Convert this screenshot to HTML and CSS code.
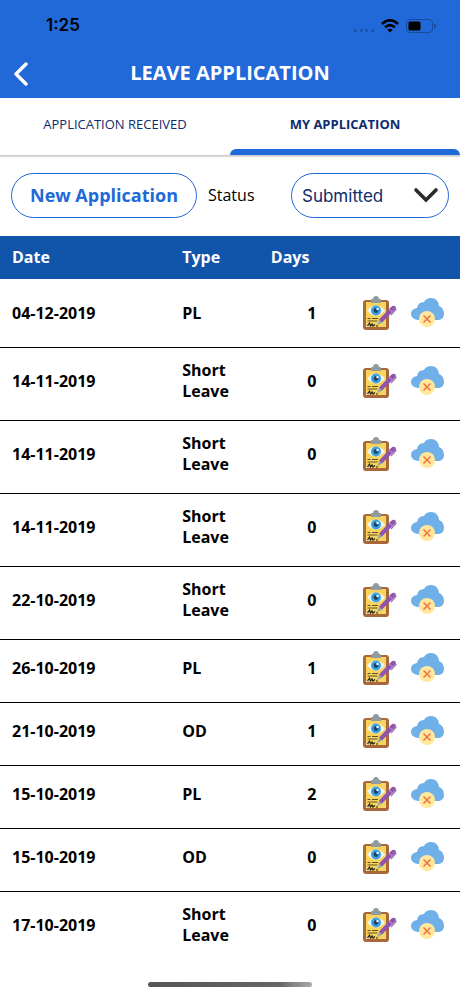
FILE: index.html
```
<!DOCTYPE html>
<html lang="en">
<head>
<meta charset="utf-8">
<meta name="viewport" content="width=device-width, initial-scale=1">
<title>Leave Application</title>
<link rel="stylesheet" href="styles.css">
</head>
<body>
<svg class="sprites" aria-hidden="true">
  <symbol id="view" viewBox="0 0 34 32">
    <rect x="0" y="3" width="26" height="30" rx="3" fill="#a9683c"/>
    <path d="M3 5h20v25H6l-3-3z" fill="#f8d45c"/>
    <path d="M3 27l3 3H3z" fill="#efe3c0"/>
    <path d="M8 6V3q0-1 1-1h1q0-3 3-3t3 3h1q1 0 1 1v3z" fill="#929ca0"/>
    <path d="M4 13.500q9-10 18 0-9 10-18 0z" fill="#eaf7fb"/>
    <circle cx="13" cy="13.500" r="5" fill="#3f9fd8"/>
    <circle cx="13" cy="13.500" r="2.400" fill="#17466f"/>
    <circle cx="14.500" cy="12" r="1.200" fill="#fff"/>
    <path d="M4.500 21.500h3M9 21.500h6M4.500 24h10" stroke="#5c5024" stroke-width="1.200" fill="none"/>
    <path d="M4.500 29l2-3 1 3 1.500-2 1 2 2-1.500M13 29h2" stroke="#27251b" stroke-width="1.200" fill="none"/>
    <path d="M14 28.500l2.500-6 3 2.500z" fill="#82a9b9"/>
    <path d="M16 22.500L28 10q2-2 4-1 1.500 1 .5 3L19 25.500z" fill="#9154ad"/>
    <path d="M31 9.500l2 3-5 5.500" stroke="#9b68b5" stroke-width="1.200" fill="none"/>
    <path d="M26 12l3.500 3" stroke="#c7a0d2" stroke-width="1"/>
  </symbol>
  <symbol id="withdraw" viewBox="0 0 34 32">
    <path d="M7 23Q0 22 0 17q0-5 6-6Q7 5 13 5q2-4 7-4 7 0 8 8 5 2 5 8 0 5-5 6z" fill="#6fb0e8"/>
    <circle cx="16" cy="22" r="8" fill="#ffe89c"/>
    <path d="M12.500 18.500l7 7m0-7l-7 7" stroke="#f2703f" stroke-width="1.500" fill="none"/>
  </symbol>
</svg>

<header class="top">
  <div class="status-bar">
    <span class="clock">1:25</span>
    <span class="signals">
      <svg width="20" height="14" viewBox="0 0 20 14" aria-hidden="true"><g fill="#1b54ac"><rect x="0" y="10" width="3" height="3" rx="1"/><rect x="6" y="10" width="3" height="3" rx="1"/><rect x="11" y="10" width="3" height="3" rx="1"/><rect x="17" y="10" width="3" height="3" rx="1"/></g></svg>
      <svg width="18" height="14" viewBox="0 0 18 14" aria-hidden="true"><g fill="none" stroke="#000" stroke-width="2.600"><path d="M1 5q8-7.500 16 0"/><path d="M4 8.300q5-4.500 10 0"/></g><path d="M6.300 10.700q2.700-2 5.400 0L9 13.500z"/></svg>
      <svg width="30" height="14" viewBox="0 0 30 14" aria-hidden="true"><rect x=".5" y=".5" width="26" height="13" rx="3.500" fill="none" stroke="#174b9b"/><rect x="2.500" y="2.500" width="12" height="9" rx="1.500"/><path d="M28 4.500q2 .5 2 2.500t-2 2.500z" fill="#174b9b"/></svg>
    </span>
  </div>
  <div class="title-bar">
    <button class="back" type="button" aria-label="Back"><svg width="16" height="26" viewBox="0 0 16 26" aria-hidden="true"><path d="M13 4L3 14l10 10" fill="none" stroke="#fff" stroke-width="3.400" stroke-linecap="round" stroke-linejoin="round"/></svg></button>
    <h1>LEAVE APPLICATION</h1>
  </div>
</header>

<nav class="tabs">
  <a class="tab" href="#received">APPLICATION RECEIVED</a>
  <a class="tab active" href="#mine" aria-current="page">MY APPLICATION</a>
</nav>

<main id="mine">
  <form class="filters">
    <button class="new" type="button">New Application</button>
    <label for="status">Status</label>
    <span class="picker">
      <select id="status"><option>Submitted</option></select>
      <svg class="arrow" width="26" height="16" viewBox="0 0 26 16" aria-hidden="true"><path d="M3 3l10 10L23 3" fill="none" stroke="#2b2b2b" stroke-width="3.600" stroke-linecap="round"/></svg>
    </span>
  </form>
  <table>
    <colgroup><col class="c-date"><col class="c-type"><col class="c-days"><col class="c-actions"></colgroup>
    <thead><tr><th>Date</th><th>Type</th><th class="days">Days</th><th></th></tr></thead>
    <tbody>
      <tr><td>04-12-2019</td><td>PL</td><td class="days">1</td><td><div class="actions"><button type="button" aria-label="View"><svg><use href="#view"/></svg></button><button type="button" aria-label="Withdraw"><svg><use href="#withdraw"/></svg></button></div></td></tr>
      <tr><td>14-11-2019</td><td>Short Leave</td><td class="days">0</td><td><div class="actions"><button type="button" aria-label="View"><svg><use href="#view"/></svg></button><button type="button" aria-label="Withdraw"><svg><use href="#withdraw"/></svg></button></div></td></tr>
      <tr><td>14-11-2019</td><td>Short Leave</td><td class="days">0</td><td><div class="actions"><button type="button" aria-label="View"><svg><use href="#view"/></svg></button><button type="button" aria-label="Withdraw"><svg><use href="#withdraw"/></svg></button></div></td></tr>
      <tr><td>14-11-2019</td><td>Short Leave</td><td class="days">0</td><td><div class="actions"><button type="button" aria-label="View"><svg><use href="#view"/></svg></button><button type="button" aria-label="Withdraw"><svg><use href="#withdraw"/></svg></button></div></td></tr>
      <tr><td>22-10-2019</td><td>Short Leave</td><td class="days">0</td><td><div class="actions"><button type="button" aria-label="View"><svg><use href="#view"/></svg></button><button type="button" aria-label="Withdraw"><svg><use href="#withdraw"/></svg></button></div></td></tr>
      <tr><td>26-10-2019</td><td>PL</td><td class="days">1</td><td><div class="actions"><button type="button" aria-label="View"><svg><use href="#view"/></svg></button><button type="button" aria-label="Withdraw"><svg><use href="#withdraw"/></svg></button></div></td></tr>
      <tr><td>21-10-2019</td><td>OD</td><td class="days">1</td><td><div class="actions"><button type="button" aria-label="View"><svg><use href="#view"/></svg></button><button type="button" aria-label="Withdraw"><svg><use href="#withdraw"/></svg></button></div></td></tr>
      <tr><td>15-10-2019</td><td>PL</td><td class="days">2</td><td><div class="actions"><button type="button" aria-label="View"><svg><use href="#view"/></svg></button><button type="button" aria-label="Withdraw"><svg><use href="#withdraw"/></svg></button></div></td></tr>
      <tr><td>15-10-2019</td><td>OD</td><td class="days">0</td><td><div class="actions"><button type="button" aria-label="View"><svg><use href="#view"/></svg></button><button type="button" aria-label="Withdraw"><svg><use href="#withdraw"/></svg></button></div></td></tr>
      <tr><td>17-10-2019</td><td>Short Leave</td><td class="days">0</td><td><div class="actions"><button type="button" aria-label="View"><svg><use href="#view"/></svg></button><button type="button" aria-label="Withdraw"><svg><use href="#withdraw"/></svg></button></div></td></tr>
    </tbody>
  </table>
</main>
<div class="home-indicator"></div>
</body>
</html>
```
FILE: styles.css
```
* { box-sizing: border-box; }

body {
  margin: 0;
  min-height: 100vh;
  display: flex;
  flex-direction: column;
  background: #fff;
  color: #000;
  font: 16px/21px "Open Sans", sans-serif;
}

button {
  padding: 0;
  border: 0;
  background: none;
  font: inherit;
}

svg { display: block; }

.sprites {
  position: absolute;
  width: 0;
  height: 0;
}

.top {
  background: #2169d8;
  color: #fff;
}

.status-bar {
  display: flex;
  justify-content: space-between;
  align-items: center;
  height: 48px;
  padding: 3px 24px 0 46px;
}

.clock {
  color: #000;
  font: 600 17px/21px Inter, sans-serif;
}

.signals {
  display: flex;
  gap: 7px;
}

.title-bar {
  display: grid;
  grid-template-columns: 40px 1fr 40px;
  align-items: center;
  height: 50px;
}

.back { padding-left: 13px; }

h1 {
  margin: 0;
  font-size: 20px;
  line-height: 28px;
  font-weight: 700;
  text-align: center;
}

.tabs {
  display: grid;
  grid-template-columns: 1fr 1fr;
  height: 58px;
  border-bottom: 1px solid #ccc;
  box-shadow: 0 1px 1px #ddd;
}

.tab {
  position: relative;
  padding-top: 16px;
  color: #0d2c6c;
  font-size: 13px;
  text-align: center;
  text-decoration: none;
}

.tab.active { font-weight: 700; }

.tab.active::after {
  content: "";
  position: absolute;
  inset: auto 0 0;
  height: 6px;
  border-radius: 6px 6px 0 0;
  background: #2169d8;
}

.filters {
  display: flex;
  align-items: center;
  padding: 17px 11px 18px;
}

.new {
  width: 186px;
  height: 45px;
  border: 1px solid #2169d8;
  border-radius: 23px;
  color: #2169d8;
  font-size: 18px;
  font-weight: 700;
}

label { margin-left: 11px; }

.picker {
  position: relative;
  margin-left: auto;
}

select {
  width: 158px;
  height: 45px;
  padding: 0 40px 0 10px;
  appearance: none;
  border: 1px solid #2169d8;
  border-radius: 23px;
  background: #fff;
  color: #0d2c6c;
  font: 17px/24px Inter, sans-serif;
}

.arrow {
  position: absolute;
  top: 14px;
  right: 10px;
  pointer-events: none;
}

table {
  width: 100%;
  border-spacing: 0;
  table-layout: fixed;
  font-weight: 700;
}

.c-date { width: 37%; }
.c-type { width: 17%; }
.c-days { width: 15%; }

th {
  padding: 11px 12px;
  background: #1155ab;
  color: #fff;
  text-align: left;
}

td {
  padding: 12px 12px 18px;
  border-bottom: 1px solid #000;
}

th:last-child,
td:last-child { padding-left: 0; }

tr > :nth-child(3) { padding-left: 0; }

tbody tr:first-child td { padding-top: 18px; }
tbody tr:last-child td { border-bottom: 0; }

th.days,
td.days {
  padding-right: 8px;
  text-align: right;
}

td.days { padding-right: 1px; }

.actions {
  display: flex;
  justify-content: flex-end;
  gap: 14px;
  margin-right: 3px;
}

.actions svg {
  width: 34px;
  height: 32px;
  overflow: visible;
}

symbol { overflow: visible; }

.home-indicator {
  width: 164px;
  height: 5px;
  margin: auto auto 9px;
  border-radius: 3px;
  background: linear-gradient(90deg, #555, #666 80%, #aaa);
}
```
